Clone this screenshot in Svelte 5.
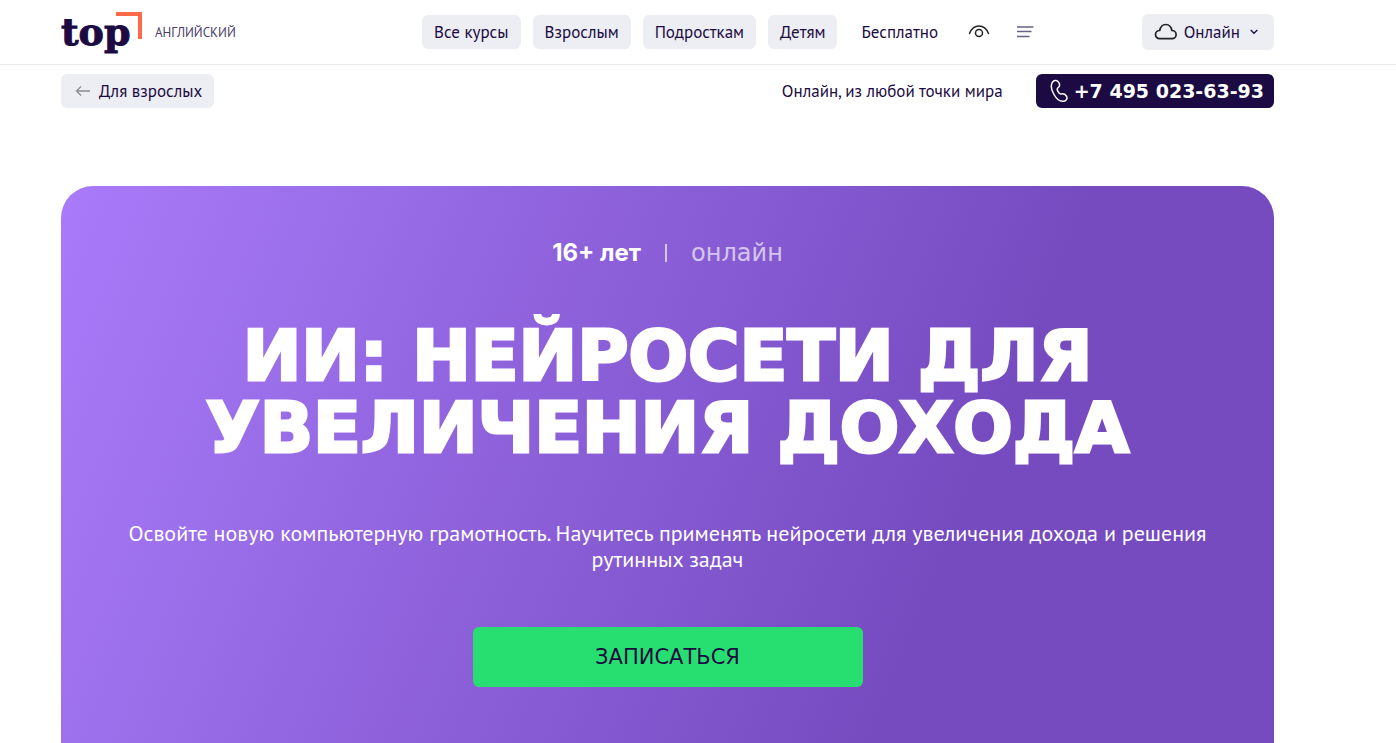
<script lang="ts">
  type NavItem = { label: string; plain?: boolean };

  const nav: NavItem[] = [
    { label: 'Все курсы' },
    { label: 'Взрослым' },
    { label: 'Подросткам' },
    { label: 'Детям' },
    { label: 'Бесплатно', plain: true },
  ];
</script>

<header class="header">
  <div class="wrap bar">
    <a class="logo" href="#home">
      <span class="logo-mark">top</span>
      <svg class="logo-corner" width="26" height="27" viewBox="0 0 26 27" aria-hidden="true">
        <path d="M0 0H26V27H22V4H0Z" fill="#ff6b4a" />
      </svg>
      <span class="logo-sub">АНГЛИЙСКИЙ</span>
    </a>

    <nav class="nav">
      {#each nav as item (item.label)}
        <a class="chip" class:plain={item.plain} href="#courses">{item.label}</a>
      {/each}
      <button class="icon eye" type="button" aria-label="Версия для слабовидящих">
        <svg width="22" height="16" viewBox="0 0 22 16" fill="none" stroke="#222" stroke-width="1.5">
          <path d="M1.5 9.5C3.5 4.5 7 2 11 2S18.5 4.5 20.5 9.5" stroke-linecap="round" />
          <circle cx="11" cy="9" r="3.5" />
        </svg>
      </button>
      <button class="icon" type="button" aria-label="Меню">
        <svg width="18" height="14" viewBox="0 0 18 14" stroke="#6a6083" stroke-width="1.5">
          <path d="M1 2H17.5M1 6.5H15.5M1 11.5H13.5" />
        </svg>
      </button>
    </nav>

    <button class="chip place" type="button">
      <svg width="24" height="18" viewBox="0 0 24 18" fill="none" stroke="#222" stroke-width="1.7">
        <path d="M5.5 15.7A4.1 4.1 0 0 1 5.7 7.5C6.5 3.6 8.7 1.5 11.8 1.5S17.1 3.6 17.9 7.5A4.1 4.1 0 0 1 18.1 15.7Z" stroke-linejoin="round" />
      </svg>
      Онлайн
      <svg class="chevron" width="8" height="6" viewBox="0 0 8 6" fill="none" stroke="#1b0b42" stroke-width="1.3">
        <path d="M0.7 1L4 4.3L7.3 1" />
      </svg>
    </button>
  </div>
</header>

<div class="wrap subbar">
  <a class="chip back" href="#adults">
    <svg width="16" height="12" viewBox="0 0 16 12" fill="none" stroke="#8b8b91" stroke-width="1.3">
      <path d="M15 6H1.5M6 1.5L1.5 6L6 10.5" />
    </svg>
    Для взрослых
  </a>
  <span class="where">Онлайн, из любой точки мира</span>
  <a class="phone" href="tel:+74950236393">
    <svg width="18" height="24" viewBox="0 0 18 24" fill="none" stroke="#fff" stroke-width="1.5" stroke-linejoin="round">
      <path d="M2.8 2.8C4.5 1 7.5 1.2 8.8 3.5C10 5.6 9.7 7.3 8.4 8.3C6.9 9.3 7 10.800 7.9 12.4C8.8 14.2 10 15.400 11.500 15C13.300 14.500 15.200 15.400 16.400 17C17.600 19 16.800 21.200 14.700 22C11 23.200 6.800 20.500 4 15.500C1.200 10.500 0.600 5.300 2.800 2.800Z" />
    </svg>
    +7 495 023-63-93
  </a>
</div>

<main class="wrap">
  <section class="hero">
    <p class="tags">
      <strong>16+ лет</strong>
      <span class="divider"></span>
      <span class="format">онлайн</span>
    </p>
    <h1>ИИ: НЕЙРОСЕТИ ДЛЯ УВЕЛИЧЕНИЯ ДОХОДА</h1>
    <p class="lead">
      Освойте новую компьютерную грамотность. Научитесь применять нейросети для увеличения дохода и решения рутинных задач
    </p>
    <button class="cta" type="button">ЗАПИСАТЬСЯ</button>
  </section>
</main>

<style>
  :global(body) {
    margin: 0;
    background: #fff;
    color: #1b0b42;
    font-family: 'PT Sans', 'Noto Sans', sans-serif;
    font-size: 17px;
    line-height: 24px;
  }
  a {
    color: inherit;
    text-decoration: none;
  }
  button {
    font: inherit;
    color: inherit;
    border: 0;
    padding: 0;
    background: none;
    cursor: pointer;
  }
  svg {
    display: block;
    flex-shrink: 0;
  }
  .wrap {
    padding: 0 122px 0 61px;
  }
  .header {
    border-bottom: 1px solid #ecedf3;
  }
  .bar {
    display: grid;
    grid-template-columns: 361px auto 1fr;
    align-items: center;
    height: 64px;
  }
  .logo {
    position: relative;
    display: flex;
    align-items: center;
  }
  .logo-mark {
    font-family: 'DejaVu Serif', serif;
    font-size: 38px;
    font-weight: 700;
    line-height: 40px;
    width: 94px;
    -webkit-text-stroke: 1px currentColor;
  }
  .logo-corner {
    position: absolute;
    left: 55px;
    top: 0;
  }
  .logo-sub {
    font-size: 13px;
    padding-top: 2px;
    color: #493c69;
  }
  .nav {
    display: flex;
    align-items: center;
    gap: 12px;
    white-space: nowrap;
  }
  .chip {
    display: flex;
    align-items: center;
    height: 34px;
    padding: 0 12px;
    border-radius: 6px;
    background: #edeef4;
  }
  .plain {
    background: none;
  }
  .icon {
    padding: 4px;
  }
  .eye {
    margin: 0 6px 0 2px;
  }
  .place {
    justify-self: end;
    height: 36px;
    gap: 6px;
  }
  .chevron {
    margin: 0 4px;
  }
  .subbar {
    display: flex;
    align-items: center;
    padding-top: 9px;
  }
  .back {
    gap: 8px;
    padding-left: 14px;
  }
  .where {
    margin-left: auto;
    margin-right: 33px;
  }
  .phone {
    display: flex;
    align-items: center;
    gap: 6px;
    height: 34px;
    padding: 0 10px 0 14px;
    border-radius: 6px;
    background: #1b0b42;
    color: #fff;
    font-family: 'DejaVu Sans', sans-serif;
    font-size: 19px;
    font-weight: 700;
  }
  .hero {
    display: flex;
    flex-direction: column;
    align-items: center;
    margin-top: 78px;
    padding: 52px 60px 56px;
    border-radius: 32px 32px 0 0;
    background: linear-gradient(112deg, #a97bfa 0%, #764bc0 72%);
    color: #fff;
    text-align: center;
  }
  .tags {
    display: flex;
    align-items: center;
    gap: 24px;
    margin: 0;
    font-family: 'DejaVu Sans', sans-serif;
    font-size: 24px;
    line-height: 30px;
  }
  .tags strong {
    font-family: Inter, sans-serif;
    font-weight: 700;
  }
  .divider {
    width: 2px;
    height: 18px;
    background: #fff;
    opacity: 0.65;
  }
  .format {
    opacity: 0.65;
  }
  h1 {
    margin: 52px 0 0;
    max-width: 1040px;
    font-family: 'DejaVu Sans', sans-serif;
    font-size: 70px;
    font-weight: 700;
    line-height: 72px;
    -webkit-text-stroke: 3px currentColor;
  }
  .lead {
    margin: 56px 0 0;
    font-size: 22px;
    line-height: 26px;
  }
  .cta {
    width: 390px;
    max-width: 100%;
    height: 60px;
    margin-top: 55px;
    border-radius: 6px;
    background: #27df70;
    color: #1b0b42;
    font-family: 'DejaVu Sans', sans-serif;
    font-size: 21px;
  }
</style>
